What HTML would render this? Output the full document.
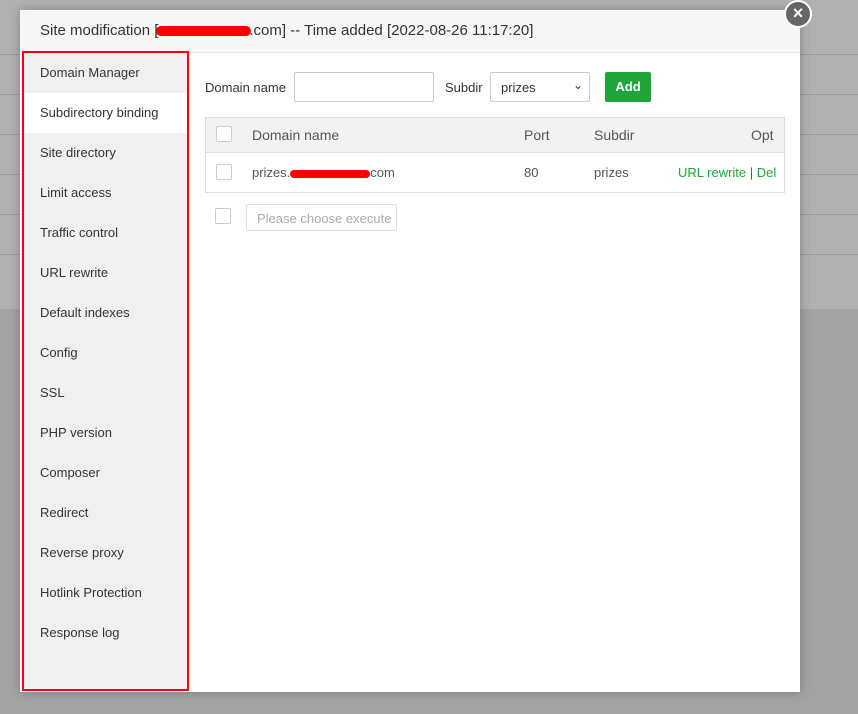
<!DOCTYPE html>
<html><head><style>
body{margin:0;width:858px;height:714px;overflow:hidden;font-family:"Liberation Sans",sans-serif;background:#a3a3a3;position:relative}
.bgtop{position:absolute;left:0;top:0;width:858px;height:309px;background:#b0b0b0}
.ln{position:absolute;left:0;width:858px;height:1px;background:#999}
.modal{position:absolute;left:20px;top:10px;width:780px;height:682px;background:#fff;box-shadow:0 0 10px rgba(0,0,0,.25)}
.hd{height:42px;background:#f6f6f6;border-bottom:1px solid #e5e5e5;font-size:15px;color:#333;line-height:42px;padding-left:20px}
.red{display:inline-block;width:95px;height:10px;background:#f00;border-radius:5px;vertical-align:middle;margin:0 -2px}
.side{position:absolute;left:2px;top:41px;width:163px;height:636px;border:2px solid #f00;background:#f0f0f0}
.side div{height:40px;line-height:40px;padding-left:16px;font-size:13px;color:#333}
.side .act{background:#fff}
.close{position:absolute;left:784px;top:0;width:24px;height:24px;border-radius:50%;background:#666;border:2px solid #fff;color:#fff;font-size:18px;line-height:23px;text-align:center;font-weight:bold}
.t{position:absolute;font-size:13px;color:#333}
.box{position:absolute;border:1px solid #ccc;border-radius:2px;background:#fff}
.cb{position:absolute;width:14px;height:14px;border:1px solid #ccc;border-radius:2px;background:#fff}
</style></head><body>
<div class="bgtop"></div>
<div class="ln" style="top:54px"></div><div class="ln" style="top:94px"></div><div class="ln" style="top:134px"></div><div class="ln" style="top:174px"></div><div class="ln" style="top:214px"></div><div class="ln" style="top:254px"></div>
<div class="modal">
<div class="hd">Site modification [<span class="red"></span>.com] -- Time added [2022-08-26 11:17:20]</div>
<div class="side">
<div>Domain Manager</div><div class="act">Subdirectory binding</div><div>Site directory</div><div>Limit access</div><div>Traffic control</div><div>URL rewrite</div><div>Default indexes</div><div>Config</div><div>SSL</div><div>PHP version</div><div>Composer</div><div>Redirect</div><div>Reverse proxy</div><div>Hotlink Protection</div><div>Response log</div>
</div>
</div>
<div class="close">×</div>
<div class="t" style="left:205px;top:80px">Domain name</div>
<div class="box" style="left:294px;top:72px;width:138px;height:28px"></div>
<div class="t" style="left:445px;top:80px">Subdir</div>
<div class="box" style="left:490px;top:72px;width:98px;height:28px"><span class="t" style="left:10px;top:7px">prizes</span><span class="t" style="left:82px;top:5px;font-size:12px">⌄</span></div>
<div style="position:absolute;left:605px;top:72px;width:46px;height:30px;background:#20a53a;border-radius:2px;color:#fff;font-size:13px;font-weight:bold;text-align:center;line-height:30px">Add</div>
<div style="position:absolute;left:205px;top:117px;width:578px;height:74px;border:1px solid #ddd"></div>
<div style="position:absolute;left:206px;top:118px;width:578px;height:34px;background:#f2f2f2;border-bottom:1px solid #ddd"></div>
<div class="cb" style="left:216px;top:126px"></div>
<div class="t" style="left:252px;top:127px;font-size:14px;color:#555">Domain name</div>
<div class="t" style="left:524px;top:127px;font-size:14px;color:#555">Port</div>
<div class="t" style="left:594px;top:127px;font-size:14px;color:#555">Subdir</div>
<div class="t" style="left:751px;top:127px;font-size:14px;color:#555">Opt</div>
<div class="cb" style="left:216px;top:164px"></div>
<div class="t" style="left:252px;top:165px;color:#555">prizes.<span style="display:inline-block;width:80px;height:8px;background:#f00;border-radius:4px;vertical-align:middle"></span>com</div>
<div class="t" style="left:524px;top:165px;color:#555">80</div>
<div class="t" style="left:594px;top:165px;color:#555">prizes</div>
<div class="t" style="left:678px;top:165px;color:#20a53a">URL rewrite <span style="color:#555">|</span> Del</div>
<div class="cb" style="left:215px;top:208px"></div>
<div class="box" style="left:246px;top:204px;width:149px;height:25px;border-color:#ddd"><span class="t" style="left:10px;top:6px;color:#aaa">Please choose execute</span></div>
</body></html>
